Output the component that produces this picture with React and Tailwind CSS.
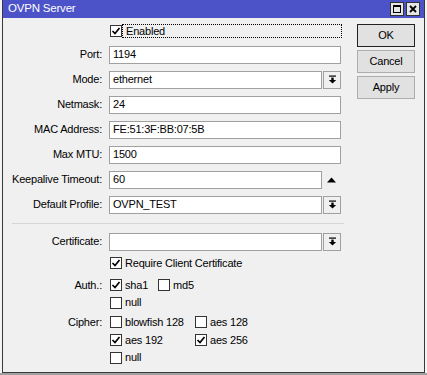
import React from "react";

const font = { fontFamily: '"Liberation Sans", Arial, sans-serif' };

function Check({ on }) {
  return (
    <span className="w-[12px] h-[12px] border border-[#333] bg-white flex items-center justify-center shrink-0">
      {on && (
        <svg width="10" height="10" viewBox="0 0 10 10">
          <path d="M1.5 5 L4 7.5 L8.5 2" stroke="#000" strokeWidth="1.7" fill="none" />
        </svg>
      )}
    </span>
  );
}

function CheckItem({ on, label, w }) {
  return (
    <div className={`flex items-center gap-[3px] ${w || ""}`}>
      <Check on={on} />
      <span>{label}</span>
    </div>
  );
}

function DropBtn() {
  return (
    <div className="w-[18px] h-[18px] border border-[#a0a0a0] bg-[#f0f0f0] flex items-center justify-center ml-[1px]">
      <svg width="9" height="9" viewBox="0 0 9 9">
        <rect x="1" y="0.5" width="7" height="1.2" fill="#000" />
        <rect x="3.3" y="2.6" width="2.4" height="2.4" fill="#000" />
        <path d="M0.8 5 L8.2 5 L4.5 8.6 Z" fill="#000" />
      </svg>
    </div>
  );
}

function Field({ value, kind }) {
  const wide = kind ? "w-[213px]" : "w-[232px]";
  return (
    <div className="flex items-center">
      <div className={`${wide} h-[18px] border border-[#a0a0a0] bg-white pl-[3px] flex items-center`}>
        {value}
      </div>
      {kind === "select" && <DropBtn />}
      {kind === "spin" && (
        <div className="w-[19px] h-[18px] flex items-center justify-center">
          <svg width="9" height="6" viewBox="0 0 9 6">
            <path d="M0 5.5 L9 5.5 L4.5 0.5 Z" fill="#000" />
          </svg>
        </div>
      )}
    </div>
  );
}

function Row({ label, children, h = "h-[25px]" }) {
  return (
    <div className={`flex items-center ${h}`}>
      <div className="w-[100px] text-right pr-[1px]">{label}</div>
      <div className="ml-[6px] flex items-center">{children}</div>
    </div>
  );
}

function Btn({ children, main }) {
  return (
    <div
      className={`w-[58px] h-[23px] flex items-center justify-center bg-[#e1e1e1] border ${
        main ? "border-[#222]" : "border-[#adadad]"
      }`}
    >
      {children}
    </div>
  );
}

export default function App() {
  return (
    <div className="w-[427px] h-[375px] bg-[#f4f4f4] text-[11px] tracking-[-0.2px] text-black overflow-hidden" style={font}>
      <div className="ml-[2px] w-[423px] h-[373px] border-l border-r border-b border-[#3a3a3a] bg-[#f0f0f0] flex flex-col">
        <div className="h-[18px] bg-[#4c53c8] flex items-center justify-between pl-[5px] pr-[4px]">
          <span className="text-white text-[11.5px]">OVPN Server</span>
          <div className="flex gap-[2px]">
            <div className="w-[14px] h-[14px] bg-[#e6e6e6] border border-[#333] flex items-center justify-center">
              <div className="w-[8px] h-[8px] border border-black border-t-2" />
            </div>
            <div className="w-[14px] h-[14px] bg-[#e6e6e6] border border-[#333] flex items-center justify-center">
              <svg width="8" height="8" viewBox="0 0 8 8">
                <path d="M1 1 L7 7 M7 1 L1 7" stroke="#000" strokeWidth="1.8" />
              </svg>
            </div>
          </div>
        </div>

        <div className="flex flex-1">
          <div className="w-[342px] pt-[2px]">
            <div className="flex items-center h-[22px]">
              <div className="w-[107px]" />
              <Check on />
              <div className="ml-[0px] w-[220px] h-[14px] border border-dotted border-black flex items-center pl-[3px]">
                Enabled
              </div>
            </div>
            <Row label="Port:"><Field value="1194" /></Row>
            <Row label="Mode:"><Field value="ethernet" kind="select" /></Row>
            <Row label="Netmask:"><Field value="24" /></Row>
            <Row label="MAC Address:"><Field value="FE:51:3F:BB:07:5B" /></Row>
            <Row label="Max MTU:"><Field value="1500" /></Row>
            <Row label="Keepalive Timeout:"><Field value="60" kind="spin" /></Row>
            <Row label="Default Profile:"><Field value="OVPN_TEST" kind="select" /></Row>

            <div className="ml-[9px] mr-[1px] mt-[6px] border-t border-[#d6d6d6]" />

            <div className="mt-[5px]">
              <Row label="Certificate:"><Field value="" kind="select" /></Row>
            </div>
            <Row label="" h="h-[18px]">
              <div className="ml-[1px]"><CheckItem on label="Require Client Certificate" /></div>
            </Row>
            <div className="mt-[4px]">
              <Row label="Auth.:" h="h-[18px]">
                <div className="ml-[1px] flex">
                  <CheckItem on label="sha1" w="w-[48px]" />
                  <CheckItem label="md5" />
                </div>
              </Row>
            </div>
            <Row label="" h="h-[17px]">
              <div className="ml-[1px]"><CheckItem label="null" /></div>
            </Row>
            <div className="mt-[2px]">
              <Row label="Cipher:" h="h-[18px]">
                <div className="ml-[1px] flex">
                  <CheckItem label="blowfish 128" w="w-[85px]" />
                  <CheckItem label="aes 128" />
                </div>
              </Row>
            </div>
            <Row label="" h="h-[18px]">
              <div className="ml-[1px] flex">
                <CheckItem on label="aes 192" w="w-[85px]" />
                <CheckItem on label="aes 256" />
              </div>
            </Row>
            <Row label="" h="h-[17px]">
              <div className="ml-[1px]"><CheckItem label="null" /></div>
            </Row>
          </div>

          <div className="pl-[12px] pt-[6px] flex flex-col gap-[3px]">
            <Btn main>OK</Btn>
            <Btn>Cancel</Btn>
            <Btn>Apply</Btn>
          </div>
        </div>
      </div>
      <div className="h-[2px] bg-[#a0a0a0]" />
    </div>
  );
}
